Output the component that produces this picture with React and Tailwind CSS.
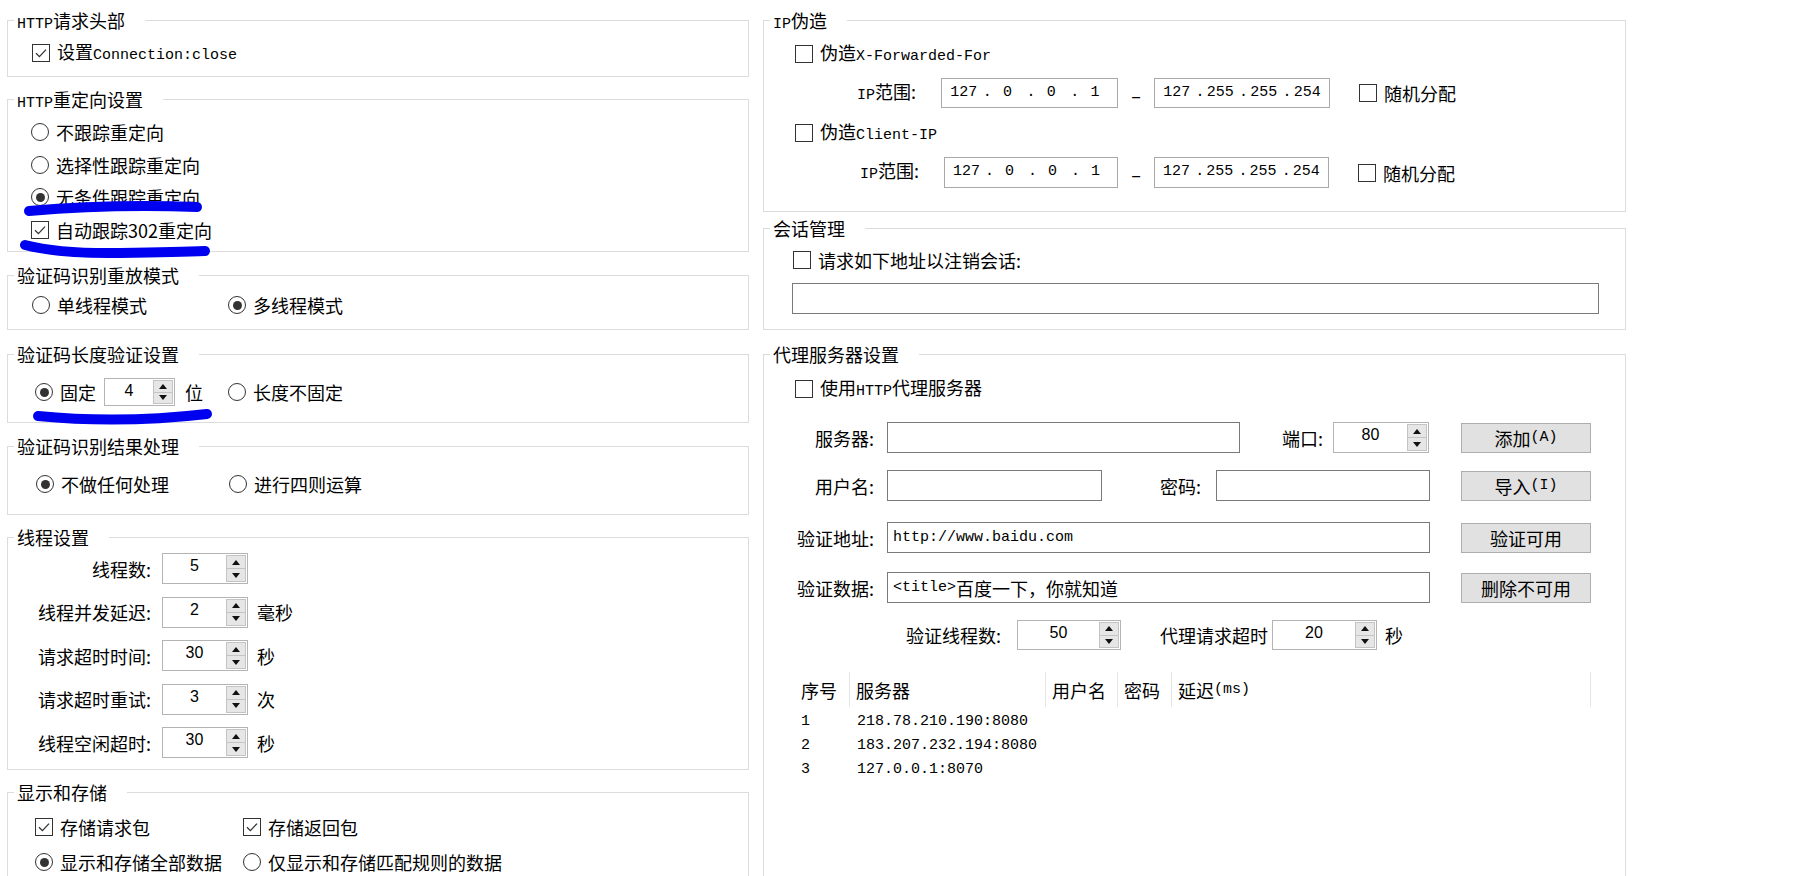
import React from "react";

// 共用的等宽字体 (模拟宋体半角英文)
const mono = "font-['Liberation_Mono','Noto_Sans_CJK_SC',monospace] text-[15px]";

function M({ children }) {
  return <span className={mono}>{children}</span>;
}

function CheckBox({ checked }) {
  return (
    <span className="flex h-[18px] w-[18px] shrink-0 items-center justify-center border border-[#333333] bg-white">
      {checked && (
        <svg width="14" height="14" viewBox="0 0 14 14">
          <path d="M2 7.2 L5.4 10.6 L12 3.6" fill="none" stroke="#333333" strokeWidth="1.3" />
        </svg>
      )}
    </span>
  );
}

function Radio({ checked }) {
  return (
    <span className="flex h-[18px] w-[18px] shrink-0 items-center justify-center rounded-full border border-[#333333] bg-white">
      {checked && <span className="h-[9px] w-[9px] rounded-full bg-[#333333]" />}
    </span>
  );
}

function Opt({ type = "check", checked, className = "", children }) {
  return (
    <div className={`flex items-center gap-[7px] ${className}`}>
      {type === "radio" ? <Radio checked={checked} /> : <CheckBox checked={checked} />}
      <span className="whitespace-nowrap leading-[22px]">{children}</span>
    </div>
  );
}

// 分组框: 标题行 + 边框主体
function Group({ title, className = "", children }) {
  return (
    <div className={`flex shrink-0 flex-col ${className}`}>
      <div className="flex h-[22px] shrink-0">
        <div className="mt-[11px] w-[7px] border-l border-t border-[#dcdcdc]" />
        <span className="whitespace-nowrap pl-[3px] pr-[20px] leading-[22px]">{title}</span>
        <div className="mt-[11px] flex-1 border-r border-t border-[#dcdcdc]" />
      </div>
      <div className="min-h-0 flex-1 border-x border-b border-[#dcdcdc]">{children}</div>
    </div>
  );
}

function Arrow({ up }) {
  return (
    <svg width="8" height="5" viewBox="0 0 8 5">
      <path d={up ? "M0 5 L4 0 L8 5 Z" : "M0 0 L4 5 L8 0 Z"} fill="#111111" />
    </svg>
  );
}

function Spin({ value, className = "" }) {
  return (
    <div className={`flex shrink-0 items-stretch border border-[#b4b4b4] bg-white ${className}`}>
      <span className="flex flex-1 justify-center pt-[2px] font-['Liberation_Sans',sans-serif] text-[16px] leading-[20px]">
        {value}
      </span>
      <span className="my-[1px] mr-[1px] flex w-[20px] flex-col border border-[#c4c4c4]">
        <span className="flex flex-1 items-center justify-center border-b border-[#c4c4c4] bg-[#e6e6e6]">
          <Arrow up />
        </span>
        <span className="flex flex-1 items-center justify-center bg-[#e6e6e6]">
          <Arrow />
        </span>
      </span>
    </div>
  );
}

function IPBox({ parts, className = "" }) {
  return (
    <div className={`flex h-[30px] shrink-0 items-center border border-[#a9a9a9] bg-white px-[3px] ${mono} ${className}`}>
      {parts.map((p, i) => (
        <React.Fragment key={i}>
          {i > 0 && <span className="w-[6px] text-center">.</span>}
          <span className="flex-1 text-center">{p}</span>
        </React.Fragment>
      ))}
    </div>
  );
}

function TextBox({ className = "", children }) {
  return (
    <div className={`flex h-[31px] shrink-0 items-center border border-[#7a7a7a] bg-white px-[5px] leading-[22px] ${className}`}>
      {children}
    </div>
  );
}

function Btn({ className = "", children }) {
  return (
    <button
      type="button"
      className={`flex h-[30px] w-[130px] shrink-0 items-center justify-center border border-[#adadad] bg-[#e1e1e1] leading-[22px] ${className}`}
    >
      {children}
    </button>
  );
}

const threadRows = [
  ["线程数:", "5", ""],
  ["线程并发延迟:", "2", "毫秒"],
  ["请求超时时间:", "30", "秒"],
  ["请求超时重试:", "3", "次"],
  ["线程空闲超时:", "30", "秒"],
];

const proxies = [
  ["1", "218.78.210.190:8080"],
  ["2", "183.207.232.194:8080"],
  ["3", "127.0.0.1:8070"],
];

const cols = [
  ["w-[55px]", "序号"],
  ["w-[196px]", "服务器"],
  ["w-[72px]", "用户名"],
  ["w-[54px]", "密码"],
  ["w-[419px]", <>延迟<M>(ms)</M></>],
];

export default function App() {
  return (
    <div className="relative flex h-[876px] w-[1804px] gap-[14px] overflow-hidden bg-white pl-[7px] font-['Noto_Sans_CJK_SC','Noto_Sans',sans-serif] text-[18px] text-black">
      {/* 左列 */}
      <div className="flex w-[742px] shrink-0 flex-col">
        <Group title={<><M>HTTP</M>请求头部</>} className="mt-[9px] h-[68px]">
          <div className="flex h-[26px] items-center pl-[24px] mt-[9px]">
            <Opt checked>设置<M>Connection:close</M></Opt>
          </div>
        </Group>

        <Group title={<><M>HTTP</M>重定向设置</>} className="mt-[11px] h-[164px]">
          <div className="flex flex-col pl-[23px] pt-[6px]">
            <Opt type="radio" className="h-[32.5px]">不跟踪重定向</Opt>
            <Opt type="radio" className="h-[32.5px]">选择性跟踪重定向</Opt>
            <Opt type="radio" checked className="h-[32.5px]">无条件跟踪重定向</Opt>
            <Opt checked className="h-[32.5px]">自动跟踪302重定向</Opt>
          </div>
        </Group>

        <Group title="验证码识别重放模式" className="mt-[12px] h-[66px]">
          <div className="flex h-[26px] items-center pl-[24px] mt-[6px]">
            <Opt type="radio" className="w-[196px]">单线程模式</Opt>
            <Opt type="radio" checked>多线程模式</Opt>
          </div>
        </Group>

        <Group title="验证码长度验证设置" className="mt-[13px] h-[80px]">
          <div className="flex h-[32px] items-center pl-[27px] mt-[11px]">
            <Opt type="radio" checked>固定</Opt>
            <Spin value="4" className="ml-[8px] h-[28px] w-[71px]" />
            <span className="ml-[10px] leading-[22px]">位</span>
            <Opt type="radio" className="ml-[25px]">长度不固定</Opt>
          </div>
        </Group>

        <Group title="验证码识别结果处理" className="mt-[12px] h-[80px]">
          <div className="flex h-[32px] items-center pl-[28px] mt-[11px]">
            <Opt type="radio" checked className="w-[193px]">不做任何处理</Opt>
            <Opt type="radio">进行四则运算</Opt>
          </div>
        </Group>

        <Group title="线程设置" className="mt-[11px] h-[244px]">
          <div className="flex flex-col gap-[12.5px] pt-[5px]">
            {threadRows.map(([label, val, unit]) => (
              <div key={label} className="flex h-[31px] items-center">
                <span className="w-[143px] text-right leading-[22px]">{label}</span>
                <Spin value={val} className="ml-[11px] h-[31px] w-[86px]" />
                {unit && <span className="ml-[9px] leading-[22px]">{unit}</span>}
              </div>
            ))}
          </div>
        </Group>

        <Group title="显示和存储" className="mt-[11px] h-[200px]">
          <div className="flex flex-col pl-[27px] pt-[9px] gap-[5px]">
            <div className="flex h-[30px] items-center">
              <Opt checked className="w-[208px]">存储请求包</Opt>
              <Opt checked>存储返回包</Opt>
            </div>
            <div className="flex h-[30px] items-center">
              <Opt type="radio" checked className="w-[208px]">显示和存储全部数据</Opt>
              <Opt type="radio">仅显示和存储匹配规则的数据</Opt>
            </div>
          </div>
        </Group>
      </div>

      {/* 右列 */}
      <div className="flex w-[863px] shrink-0 flex-col">
        <Group title={<><M>IP</M>伪造</>} className="mt-[9px] h-[203px]">
          <div className="flex flex-col pt-[10px]">
            <Opt className="h-[26px] pl-[31px]">伪造<M>X-Forwarded-For</M></Opt>
            <div className="mt-[11px] flex h-[30px] items-center">
              <span className="ml-[93px] w-[84px] leading-[22px]"><M>IP</M>范围:</span>
              <IPBox parts={["127", "0", "0", "1"]} className="w-[177px]" />
              <span className="w-[36px] pt-[3px] text-center leading-[22px]">–</span>
              <IPBox parts={["127", "255", "255", "254"]} className="w-[176px]" />
              <Opt className="ml-[29px]">随机分配</Opt>
            </div>
            <Opt className="mt-[12px] h-[26px] pl-[31px]">伪造<M>Client-IP</M></Opt>
            <div className="mt-[11px] flex h-[31px] items-center">
              <span className="ml-[96px] w-[84px] leading-[22px]"><M>IP</M>范围:</span>
              <IPBox parts={["127", "0", "0", "1"]} className="h-[31px] w-[174px]" />
              <span className="w-[36px] pt-[3px] text-center leading-[22px]">–</span>
              <IPBox parts={["127", "255", "255", "254"]} className="h-[31px] w-[175px]" />
              <Opt className="ml-[29px]">随机分配</Opt>
            </div>
          </div>
        </Group>

        <Group title="会话管理" className="mt-[5px] h-[113px]">
          <div className="flex flex-col pl-[28px] pt-[8px]">
            <Opt className="h-[26px] pl-[1px]">请求如下地址以注销会话:</Opt>
            <TextBox className="mt-[10px] w-[807px]" />
          </div>
        </Group>

        <Group title="代理服务器设置" className="mt-[13px] h-[560px]">
          <div className="flex flex-col pt-[11px]">
            <Opt className="h-[26px] pl-[31px]">使用<M>HTTP</M>代理服务器</Opt>

            <div className="mt-[20px] flex h-[31px] items-center">
              <span className="w-[110px] text-right leading-[22px]">服务器:</span>
              <TextBox className="ml-[13px] w-[353px]" />
              <span className="w-[93px] pr-[10px] text-right leading-[22px]">端口:</span>
              <Spin value="80" className="h-[31px] w-[96px]" />
              <Btn className="ml-[32px]">添加<M>(A)</M></Btn>
            </div>

            <div className="mt-[17px] flex h-[31px] items-center">
              <span className="w-[110px] text-right leading-[22px]">用户名:</span>
              <TextBox className="ml-[13px] w-[215px]" />
              <span className="w-[114px] pr-[15px] text-right leading-[22px]">密码:</span>
              <TextBox className="w-[214px]" />
              <Btn className="ml-[31px]">导入<M>(I)</M></Btn>
            </div>

            <div className="mt-[21px] flex h-[31px] items-center">
              <span className="w-[110px] text-right leading-[22px]">验证地址:</span>
              <TextBox className="ml-[13px] w-[543px]">
                <M>http://www.baidu.com</M>
              </TextBox>
              <Btn className="ml-[31px]">验证可用</Btn>
            </div>

            <div className="mt-[19px] flex h-[31px] items-center">
              <span className="w-[110px] text-right leading-[22px]">验证数据:</span>
              <TextBox className="ml-[13px] w-[543px]">
                <M>&lt;title&gt;</M>百度一下，你就知道
              </TextBox>
              <Btn className="ml-[31px]">删除不可用</Btn>
            </div>

            <div className="mt-[17px] flex h-[30px] items-center">
              <span className="w-[253px] pr-[16px] text-right leading-[22px]">验证线程数:</span>
              <Spin value="50" className="h-[30px] w-[104px]" />
              <span className="w-[151px] pr-[4px] text-right leading-[22px]">代理请求超时</span>
              <Spin value="20" className="h-[30px] w-[105px]" />
              <span className="ml-[8px] leading-[22px]">秒</span>
            </div>

            <div className="mt-[22px] pl-[31px]">
              <div className="flex h-[35px]">
                {cols.map(([w, t], i) => (
                  <div key={i} className={`flex h-full items-center border-r border-[#e5e5e5] pl-[6px] leading-[22px] ${w}`}>
                    {t}
                  </div>
                ))}
              </div>
              <div className="pt-[3px]">
                {proxies.map(([n, addr]) => (
                  <div key={n} className={`flex h-[24px] items-center ${mono}`}>
                    <span className="w-[55px] pl-[6px]">{n}</span>
                    <span className="pl-[7px]">{addr}</span>
                  </div>
                ))}
              </div>
            </div>
          </div>
        </Group>
      </div>

      {/* 蓝色标注线 */}
      <svg className="pointer-events-none absolute left-0 top-0" width="260" height="440" viewBox="0 0 260 440">
        <path d="M29 211 Q 110 204 197 207" fill="none" stroke="#0000f0" strokeWidth="10" strokeLinecap="round" />
        <path d="M25 245 Q 60 254 120 253 T 205 251" fill="none" stroke="#0000f0" strokeWidth="10" strokeLinecap="round" />
        <path d="M38 416 Q 120 424 207 414" fill="none" stroke="#0000f0" strokeWidth="10" strokeLinecap="round" />
      </svg>
    </div>
  );
}
